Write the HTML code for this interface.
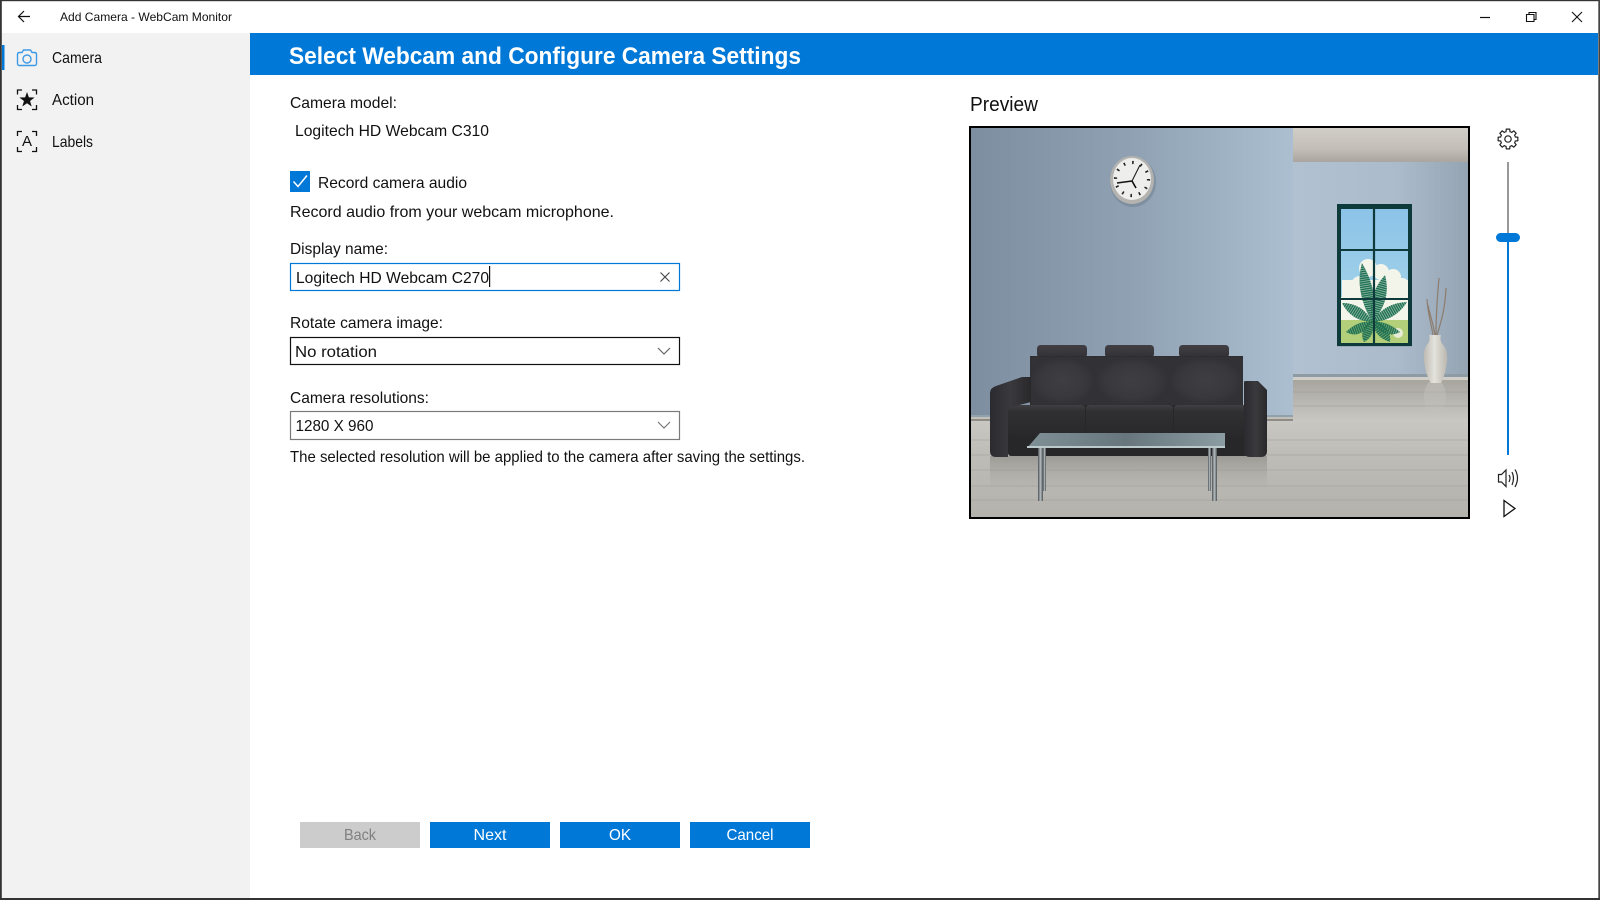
<!DOCTYPE html>
<html lang="en">
<head>
<meta charset="utf-8">
<title>Add Camera - WebCam Monitor</title>
<style>
html,body{margin:0;padding:0;background:#fff;width:1600px;height:900px;overflow:hidden}
svg{display:block;position:absolute;left:0;top:0}
text{font-family:"Liberation Sans",sans-serif;font-size:16px;fill:#111}
</style>
</head>
<body>
<svg width="1600" height="900" viewBox="0 0 1600 900" xmlns="http://www.w3.org/2000/svg">
<defs>
<linearGradient id="wallL" x1="0" x2="1" y1="0" y2="0"><stop offset="0" stop-color="#7c8ea0"/><stop offset=".5" stop-color="#8fa1b3"/><stop offset="1" stop-color="#abbfd0"/></linearGradient>
<linearGradient id="wallR" x1="0" x2="1" y1="0" y2="0"><stop offset="0" stop-color="#b2c1d1"/><stop offset=".6" stop-color="#abbbcb"/><stop offset="1" stop-color="#94a4b3"/></linearGradient>
<linearGradient id="ceil" x1="0" x2="0" y1="0" y2="1"><stop offset="0" stop-color="#d0cec7"/><stop offset=".6" stop-color="#c3bfb8"/><stop offset="1" stop-color="#aaa59e"/></linearGradient>
<linearGradient id="floor" x1="0" x2="0" y1="0" y2="1"><stop offset="0" stop-color="#a8a59f"/><stop offset=".3" stop-color="#c8c7c2"/><stop offset=".55" stop-color="#bebcb7"/><stop offset="1" stop-color="#b4b2ac"/></linearGradient>
<linearGradient id="refl" x1="0" x2="0" y1="0" y2="1"><stop offset="0" stop-color="#8e8c86" stop-opacity=".7"/><stop offset="1" stop-color="#a5a29c" stop-opacity="0"/></linearGradient>
<linearGradient id="vrefl" x1="0" x2="0" y1="0" y2="1"><stop offset="0" stop-color="#d9d7d1" stop-opacity=".35"/><stop offset="1" stop-color="#d9d7d1" stop-opacity="0"/></linearGradient>
<linearGradient id="sky" x1="0" x2="0" y1="0" y2="1"><stop offset="0" stop-color="#8cc3e8"/><stop offset="1" stop-color="#aad8e8"/></linearGradient>
<linearGradient id="glass" x1="0" x2="1" y1="0" y2="0"><stop offset="0" stop-color="#7f9096"/><stop offset=".5" stop-color="#66767c"/><stop offset="1" stop-color="#8b9ca2"/></linearGradient>
<linearGradient id="vase" x1="0" x2="1" y1="0" y2="0"><stop offset="0" stop-color="#bcb9b1"/><stop offset=".45" stop-color="#e4e2dc"/><stop offset="1" stop-color="#bab7af"/></linearGradient>
<linearGradient id="leg" x1="0" x2="1" y1="0" y2="0"><stop offset="0" stop-color="#4a5054"/><stop offset=".5" stop-color="#b7bec2"/><stop offset="1" stop-color="#4a5054"/></linearGradient>
<linearGradient id="arm" x1="0" x2="1" y1="0" y2="0"><stop offset="0" stop-color="#2b2a2e"/><stop offset=".5" stop-color="#3a393d"/><stop offset="1" stop-color="#29282b"/></linearGradient>
<linearGradient id="seat" x1="0" x2="0" y1="0" y2="1"><stop offset="0" stop-color="#403f42"/><stop offset=".2" stop-color="#302f32"/><stop offset="1" stop-color="#29282b"/></linearGradient>
<linearGradient id="head" x1="0" x2="0" y1="0" y2="1"><stop offset="0" stop-color="#413f44"/><stop offset="1" stop-color="#323135"/></linearGradient>
<radialGradient id="cush"><stop offset="0" stop-color="#3f3e43"/><stop offset=".7" stop-color="#39383c"/><stop offset="1" stop-color="#323136"/></radialGradient>
<clipPath id="frame"><rect x="971" y="128" width="497" height="389"/></clipPath>
<clipPath id="glassclip"><rect x="1341" y="209" width="67" height="134"/></clipPath>
<clipPath id="l1"><path d="M1372 322Q1354 290 1362 263Q1380 294 1372 322Z"/></clipPath>
<clipPath id="l2"><path d="M1372 322Q1367 295 1385 275Q1392 301 1372 322Z"/></clipPath>
<clipPath id="l3"><path d="M1372 322Q1363 303 1342 303Q1351 321 1372 322Z"/></clipPath>
<clipPath id="l4"><path d="M1372 322Q1384 303 1407 302Q1395 321 1372 322Z"/></clipPath>
<clipPath id="l5"><path d="M1372 320Q1358 330 1364 342Q1376 336 1372 320Z"/></clipPath>
<clipPath id="l6"><path d="M1374 320Q1372 336 1390 342Q1392 328 1374 320Z"/></clipPath>
<clipPath id="l7"><path d="M1372 322Q1358 320 1346 332Q1360 340 1372 322Z"/></clipPath>
<clipPath id="l8"><path d="M1372 322Q1386 320 1400 332Q1386 340 1372 322Z"/></clipPath>
<g id="tooth"><path d="M7.02 -2.91L7.34 -1.97L9.85 -1.74L9.85 1.74L7.34 1.97L7.02 2.91" fill="none" stroke="#222" stroke-width="1.2" stroke-linejoin="round"/></g>
</defs>

<!-- window frame -->
<rect width="1600" height="900" fill="#fff"/>
<rect x="2" y="33" width="248" height="865" fill="#f2f2f2"/>
<rect x="250" y="33" width="1348" height="42" fill="#0078d7"/>
<rect x="0" y="0" width="1600" height="1.2" fill="#333"/>
<rect x="0" y="0" width="1.8" height="900" fill="#333"/>
<rect x="1598.3" y="0" width="1.7" height="900" fill="#444"/>
<rect x="0" y="898" width="1600" height="2" fill="#333"/>

<!-- title bar -->
<path d="M18.5 16.5H30M24 11L18.5 16.5L24 22" fill="none" stroke="#111" stroke-width="1.2"/>
<text x="60" y="21" textLength="172" lengthAdjust="spacingAndGlyphs" style="font-size:12px">Add Camera - WebCam Monitor</text>
<path d="M1480 17.5H1490" stroke="#111" stroke-width="1.2"/>
<path d="M1526.5 14.5H1534V21.5H1526.5ZM1529 14.5V12.5H1536V19.5H1534" fill="none" stroke="#111" stroke-width="1.1"/>
<path d="M1572 12L1582 22M1582 12L1572 22" stroke="#111" stroke-width="1.1"/>

<!-- sidebar -->
<rect x="2" y="45" width="2.5" height="25" fill="#0078d7"/>
<path d="M22 52.5L23.5 50H30.5L32 52.5H34.5Q36.5 52.5 36.5 54.5V63.5Q36.5 65.5 34.5 65.5H19.5Q17.5 65.5 17.5 63.5V54.5Q17.5 52.5 19.5 52.5Z" fill="none" stroke="#3f9ae6" stroke-width="1.4"/>
<circle cx="27" cy="59" r="4" fill="none" stroke="#3f9ae6" stroke-width="1.4"/>
<text x="52" y="63" textLength="50" lengthAdjust="spacingAndGlyphs">Camera</text>

<path d="M17.5 94.5V90H22M32 90H36.5V94.5M36.5 105V109.5H32M22 109.5H17.5V105" fill="none" stroke="#111" stroke-width="1.3"/>
<path transform="translate(27 100)" d="M0 -8L1.88 -2.59L7.61 -2.47L3.04 .99L4.7 6.47L0 3.2L-4.7 6.47L-3.04 .99L-7.61 -2.47L-1.88 -2.59Z" fill="#111"/>
<text x="52" y="105" textLength="42" lengthAdjust="spacingAndGlyphs">Action</text>

<path d="M17.5 136V131.5H22M32 131.5H36.5V136M36.5 147V151.5H32M22 151.5H17.5V147" fill="none" stroke="#111" stroke-width="1.3"/>
<text x="27" y="146" text-anchor="middle" style="font-size:15px">A</text>
<text x="52" y="147" textLength="41" lengthAdjust="spacingAndGlyphs">Labels</text>

<!-- header -->
<text x="289" y="64" textLength="512" lengthAdjust="spacingAndGlyphs" style="font-size:24px;font-weight:bold;fill:#fff">Select Webcam and Configure Camera Settings</text>

<!-- form -->
<text x="290" y="108" textLength="107" lengthAdjust="spacingAndGlyphs">Camera model:</text>
<text x="295" y="136" textLength="194" lengthAdjust="spacingAndGlyphs">Logitech HD Webcam C310</text>

<rect x="290" y="171" width="20" height="21" fill="#0078d7"/>
<path d="M293.5 181.5L298 186.5L307 175.5" fill="none" stroke="#fff" stroke-width="1.5"/>
<text x="318" y="188" textLength="149" lengthAdjust="spacingAndGlyphs">Record camera audio</text>
<text x="290" y="217" textLength="324" lengthAdjust="spacingAndGlyphs">Record audio from your webcam microphone.</text>

<text x="290" y="254" textLength="98" lengthAdjust="spacingAndGlyphs">Display name:</text>
<rect x="290.5" y="263.5" width="389" height="27" fill="#fff" stroke="#0078d7" stroke-width="1.2"/>
<text x="296" y="283" textLength="193" lengthAdjust="spacingAndGlyphs">Logitech HD Webcam C270</text>
<rect x="489" y="266" width="1.2" height="21" fill="#111"/>
<path d="M660.5 272.5L669.5 281.5M669.5 272.5L660.5 281.5" stroke="#444" stroke-width="1.1"/>

<text x="290" y="328" textLength="153" lengthAdjust="spacingAndGlyphs">Rotate camera image:</text>
<rect x="290.5" y="337.5" width="389" height="27" fill="#fff" stroke="#111" stroke-width="1.2"/>
<text x="295" y="357" textLength="82" lengthAdjust="spacingAndGlyphs">No rotation</text>
<path d="M658 348L664 354L670 348" fill="none" stroke="#666" stroke-width="1.2"/>

<text x="290" y="403" textLength="139" lengthAdjust="spacingAndGlyphs">Camera resolutions:</text>
<rect x="290.5" y="411.5" width="389" height="28" fill="#fff" stroke="#7a7a7a" stroke-width="1.2"/>
<text x="295.5" y="431" textLength="78" lengthAdjust="spacingAndGlyphs">1280 X 960</text>
<path d="M658 422L664 428L670 422" fill="none" stroke="#777" stroke-width="1.2"/>
<text x="290" y="462" textLength="515" lengthAdjust="spacingAndGlyphs">The selected resolution will be applied to the camera after saving the settings.</text>

<!-- preview -->
<text x="970" y="111" textLength="68" lengthAdjust="spacingAndGlyphs" style="font-size:20px">Preview</text>
<g clip-path="url(#frame)">
  <rect x="971" y="380" width="497" height="137" fill="url(#floor)"/>
  <rect x="971" y="128" width="322" height="290" fill="url(#wallL)"/>
  <rect x="1293" y="128" width="175" height="34" fill="url(#ceil)"/>
  <rect x="1293" y="162" width="175" height="214" fill="url(#wallR)"/>
  <rect x="1293" y="374" width="175" height="3" fill="#8e9aa4"/>
  <rect x="1293" y="377" width="175" height="3" fill="#cfcec8"/>
  <rect x="971" y="415" width="322" height="2" fill="#93a1ad"/>
  <rect x="971" y="417" width="322" height="2" fill="#c0bfba"/>
  <rect x="971" y="419" width="322" height="2" fill="#8f8c86"/>
  <path d="M971 440H1468M971 455H1468M971 470H1468M971 486H1468M971 500H1468" stroke="#96938d" stroke-width="1" opacity=".4"/>
  <path d="M1293 392H1468M1293 406H1468" stroke="#96938d" stroke-width="1" opacity=".4"/>
  <rect x="990" y="456" width="277" height="34" fill="url(#refl)"/>
  <ellipse cx="1435" cy="397" rx="11" ry="18" fill="url(#vrefl)"/>

  <!-- clock -->
  <ellipse cx="1133" cy="182" rx="23" ry="25" fill="#5f6f7c" opacity=".35"/>
  <ellipse cx="1132" cy="180" rx="22" ry="24" fill="#b4b3b0"/>
  <ellipse cx="1132" cy="179" rx="19" ry="21" fill="#eeeeec"/>
  <circle cx="1132" cy="179" r="16.5" fill="none" stroke="#222" stroke-width="3.2" stroke-dasharray="1.6 7.04"/>
  <path d="M1132 181L1140 165" stroke="#222" stroke-width="1.1"/>
  <path d="M1132 181L1117 183" stroke="#111" stroke-width="1.6"/>
  <path d="M1132 181L1136 188" stroke="#111" stroke-width="1.6"/>

  <!-- window -->
  <rect x="1337" y="204" width="75" height="143" fill="#9aa9b8"/>
  <rect x="1337" y="204" width="75" height="142" fill="#0f3a3c"/>
  <rect x="1341" y="209" width="67" height="134" fill="url(#sky)"/>
  <g clip-path="url(#glassclip)">
    <g fill="#f4f5ea">
      <circle cx="1368" cy="268" r="9"/><circle cx="1381" cy="272" r="8"/><circle cx="1393" cy="277" r="8"/><circle cx="1402" cy="286" r="8"/>
      <circle cx="1350" cy="291" r="8"/><rect x="1342" y="280" width="66" height="22"/><circle cx="1360" cy="285" r="9"/>
      <rect x="1341" y="297" width="67" height="24"/>
    </g>
    <rect x="1341" y="320" width="67" height="23" fill="#b4cf7a"/>
    <circle cx="1398" cy="333" r="5" fill="#e7ecd6"/>
    <g fill="#2f8064" opacity=".55">
      <path d="M1372 322Q1354 290 1362 263Q1380 294 1372 322Z"/>
      <path d="M1372 322Q1367 295 1385 275Q1392 301 1372 322Z"/>
      <path d="M1372 322Q1363 303 1342 303Q1351 321 1372 322Z"/>
      <path d="M1372 322Q1384 303 1407 302Q1395 321 1372 322Z"/>
      <path d="M1372 320Q1358 330 1364 342Q1376 336 1372 320Z"/>
      <path d="M1374 320Q1372 336 1390 342Q1392 328 1374 320Z"/>
      <path d="M1372 322Q1358 320 1346 332Q1360 340 1372 322Z"/>
      <path d="M1372 322Q1386 320 1400 332Q1386 340 1372 322Z"/>
    </g>
    <g fill="none" stroke="#1f6f52" stroke-width="26" stroke-dasharray="1.3 .9">
      <path clip-path="url(#l1)" d="M1372 322L1362 263"/>
      <path clip-path="url(#l2)" d="M1372 322L1385 275"/>
      <path clip-path="url(#l3)" d="M1372 322L1342 303"/>
      <path clip-path="url(#l4)" d="M1372 322L1407 302"/>
      <path clip-path="url(#l5)" d="M1372 320L1364 342"/>
      <path clip-path="url(#l6)" d="M1374 320L1390 342"/>
      <path clip-path="url(#l7)" d="M1372 322L1346 332"/>
      <path clip-path="url(#l8)" d="M1372 322L1400 332"/>
    </g>
  </g>
  <path d="M1374 209V343" stroke="#0f3a3c" stroke-width="2.2"/>
  <path d="M1341 250H1408M1341 299H1408" stroke="#0f3a3c" stroke-width="2"/>

  <!-- vase -->
  <path d="M1435 335C1433 322 1429 312 1428 305M1436 335C1436 320 1437 300 1439 278M1437 335C1441 322 1445 310 1446 288M1433 335C1431 322 1428 315 1427 299" fill="none" stroke="#8d7c6e" stroke-width="1.2"/>
  <path d="M1429 335H1441Q1439 341 1444 346Q1448 351 1447 362Q1445 376 1441 383H1431Q1426 376 1424 362Q1423 351 1426 346Q1431 341 1429 335Z" fill="url(#vase)"/>

  <!-- sofa -->
  <rect x="1037" y="345" width="50" height="12.5" rx="3.5" fill="url(#head)"/>
  <rect x="1105" y="345" width="49" height="12.5" rx="3.5" fill="url(#head)"/>
  <rect x="1179" y="345" width="50" height="12.5" rx="3.5" fill="url(#head)"/>
  <rect x="1030" y="356" width="213" height="49" fill="#2e2d31"/>
  <rect x="1030" y="357" width="65" height="48" rx="3" fill="url(#cush)"/>
  <rect x="1095" y="357" width="74" height="48" rx="3" fill="url(#cush)"/>
  <rect x="1169" y="357" width="74" height="48" rx="3" fill="url(#cush)"/>
  <rect x="1008" y="405" width="240" height="51" rx="3" fill="#272629"/>
  <rect x="1008" y="405" width="77" height="31" rx="3" fill="url(#seat)"/>
  <rect x="1086" y="405" width="87" height="31" rx="3" fill="url(#seat)"/>
  <rect x="1174" y="405" width="75" height="31" rx="3" fill="url(#seat)"/>
  <path d="M990 393Q990 388 996 386L1022 377H1031V402L1008 408V457H996Q990 457 990 451Z" fill="url(#arm)"/>
  <path d="M1244 382Q1244 381 1246 381H1258L1267 390V451Q1267 457 1261 457H1250Q1244 457 1244 451Z" fill="url(#arm)"/>

  <!-- table -->
  <rect x="1038" y="447" width="5" height="54" fill="url(#leg)"/>
  <rect x="1043" y="447" width="3" height="44" fill="url(#leg)"/>
  <rect x="1208" y="447" width="3" height="44" fill="url(#leg)"/>
  <rect x="1212" y="447" width="5" height="54" fill="url(#leg)"/>
  <path d="M1040 433H1225V448H1027Z" fill="url(#glass)"/>
  <path d="M1027 446H1225V448H1027Z" fill="#bdcacc"/>
</g>
<rect x="970" y="127" width="499" height="391" fill="none" stroke="#000" stroke-width="2"/>

<!-- right controls -->
<g transform="translate(1508 139)">
  <use href="#tooth"/>
  <use href="#tooth" transform="rotate(45)"/>
  <use href="#tooth" transform="rotate(90)"/>
  <use href="#tooth" transform="rotate(135)"/>
  <use href="#tooth" transform="rotate(180)"/>
  <use href="#tooth" transform="rotate(225)"/>
  <use href="#tooth" transform="rotate(270)"/>
  <use href="#tooth" transform="rotate(315)"/>
  <circle r="3.2" fill="none" stroke="#222" stroke-width="1.2"/>
</g>
<rect x="1507" y="162" width="2" height="72" fill="#999"/>
<rect x="1507" y="240" width="2" height="215" fill="#0078d7"/>
<rect x="1496" y="233" width="24" height="9" rx="4.5" fill="#0078d7"/>
<path d="M1498.5 474.5H1501.5L1506 470V486.5L1501.5 482H1498.5Z" fill="none" stroke="#222" stroke-width="1.2"/>
<path d="M1509 475Q1511 478 1509 482M1512 472Q1515 478 1512 485M1515 469.5Q1520 478 1515 487" fill="none" stroke="#222" stroke-width="1.2"/>
<path d="M1504 500.5L1515 508.5L1504 516.5Z" fill="#fff" stroke="#111" stroke-width="1.3"/>

<!-- buttons -->
<rect x="300" y="822" width="120" height="26" fill="#cccccc"/>
<text x="360" y="840" text-anchor="middle" textLength="32" lengthAdjust="spacingAndGlyphs" style="fill:#808080">Back</text>
<rect x="430" y="822" width="120" height="26" fill="#0078d7"/>
<text x="490" y="840" text-anchor="middle" textLength="33" lengthAdjust="spacingAndGlyphs" style="fill:#fff">Next</text>
<rect x="560" y="822" width="120" height="26" fill="#0078d7"/>
<text x="620" y="840" text-anchor="middle" textLength="22" lengthAdjust="spacingAndGlyphs" style="fill:#fff">OK</text>
<rect x="690" y="822" width="120" height="26" fill="#0078d7"/>
<text x="750" y="840" text-anchor="middle" textLength="47" lengthAdjust="spacingAndGlyphs" style="fill:#fff">Cancel</text>
</svg>
</body>
</html>
